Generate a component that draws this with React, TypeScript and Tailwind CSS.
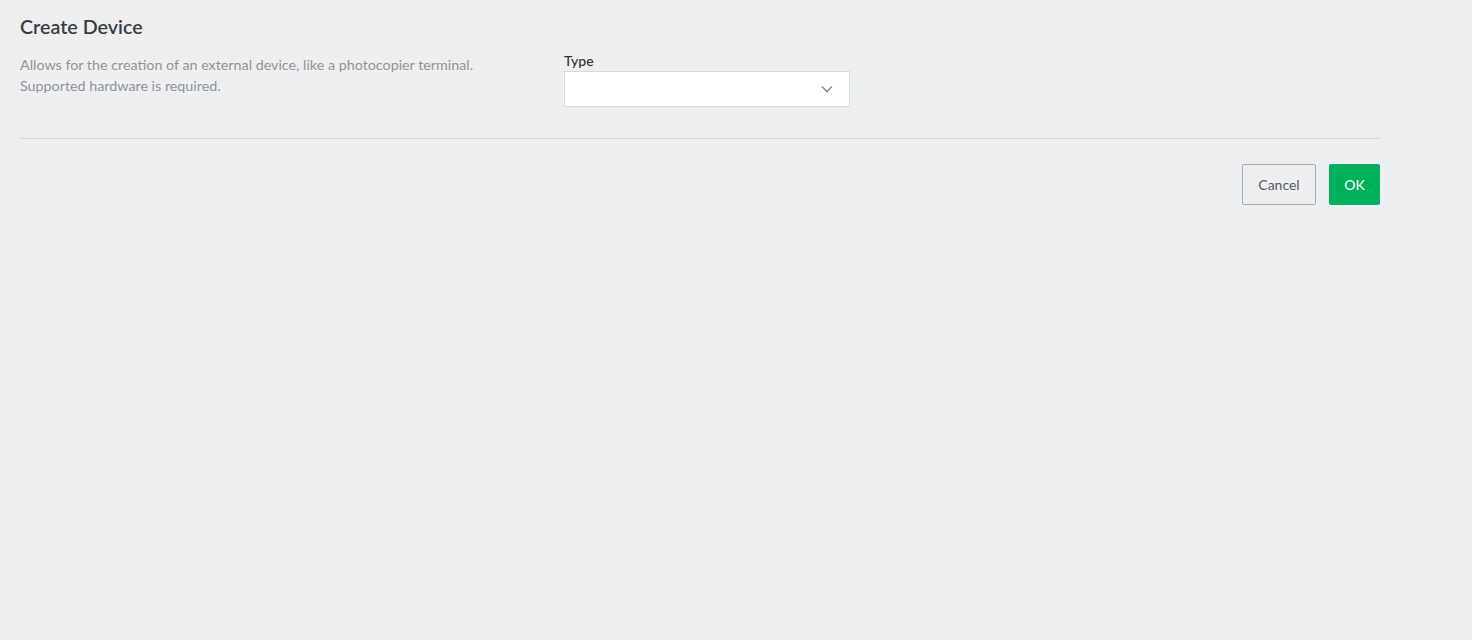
import React from "react";

export default function App() {
  return (
    <div className="min-h-[640px] w-full bg-[#eeeff1] text-[#3c3c3c]" style={{ fontFamily: "Lato, 'Open Sans', sans-serif" }}>
      <div className="w-[1360px] ml-[20px]">
        <h1 className="pt-[14px] text-[19.7px] leading-[26px] font-semibold text-[#3a3d40]">Create Device</h1>
        <div className="mt-[14px] flex">
          <p className="w-[544px] text-[14.3px] leading-[21px] text-[#8e949c]">
            Allows for the creation of an external device, like a photocopier terminal.
            <br />
            Supported hardware is required.
          </p>
          <div className="-mt-[2px] flex flex-col">
            <label className="text-[14px] leading-[18px] text-[#333] font-medium">Type</label>
            <div className="mt-[1px] flex h-[36px] w-[286px] items-center justify-end border border-[#d6dbe0] bg-white pr-[16px]">
              <svg width="12" height="8" viewBox="0 0 12 8" fill="none">
                <path d="M1 1.5L6 6.5L11 1.5" stroke="#8a9099" strokeWidth="1.6" />
              </svg>
            </div>
          </div>
        </div>
        <div className="mt-[31px] border-t border-[#d3d5d8]" />
        <div className="mt-[25px] flex justify-end gap-[13px]">
          <button className="h-[41px] w-[74px] rounded-[2px] border border-[#a9aeb4] text-[14px] text-[#555b62]">Cancel</button>
          <button className="h-[41px] w-[51px] rounded-[2px] bg-[#00b15b] text-[14px] text-white">OK</button>
        </div>
      </div>
    </div>
  );
}
